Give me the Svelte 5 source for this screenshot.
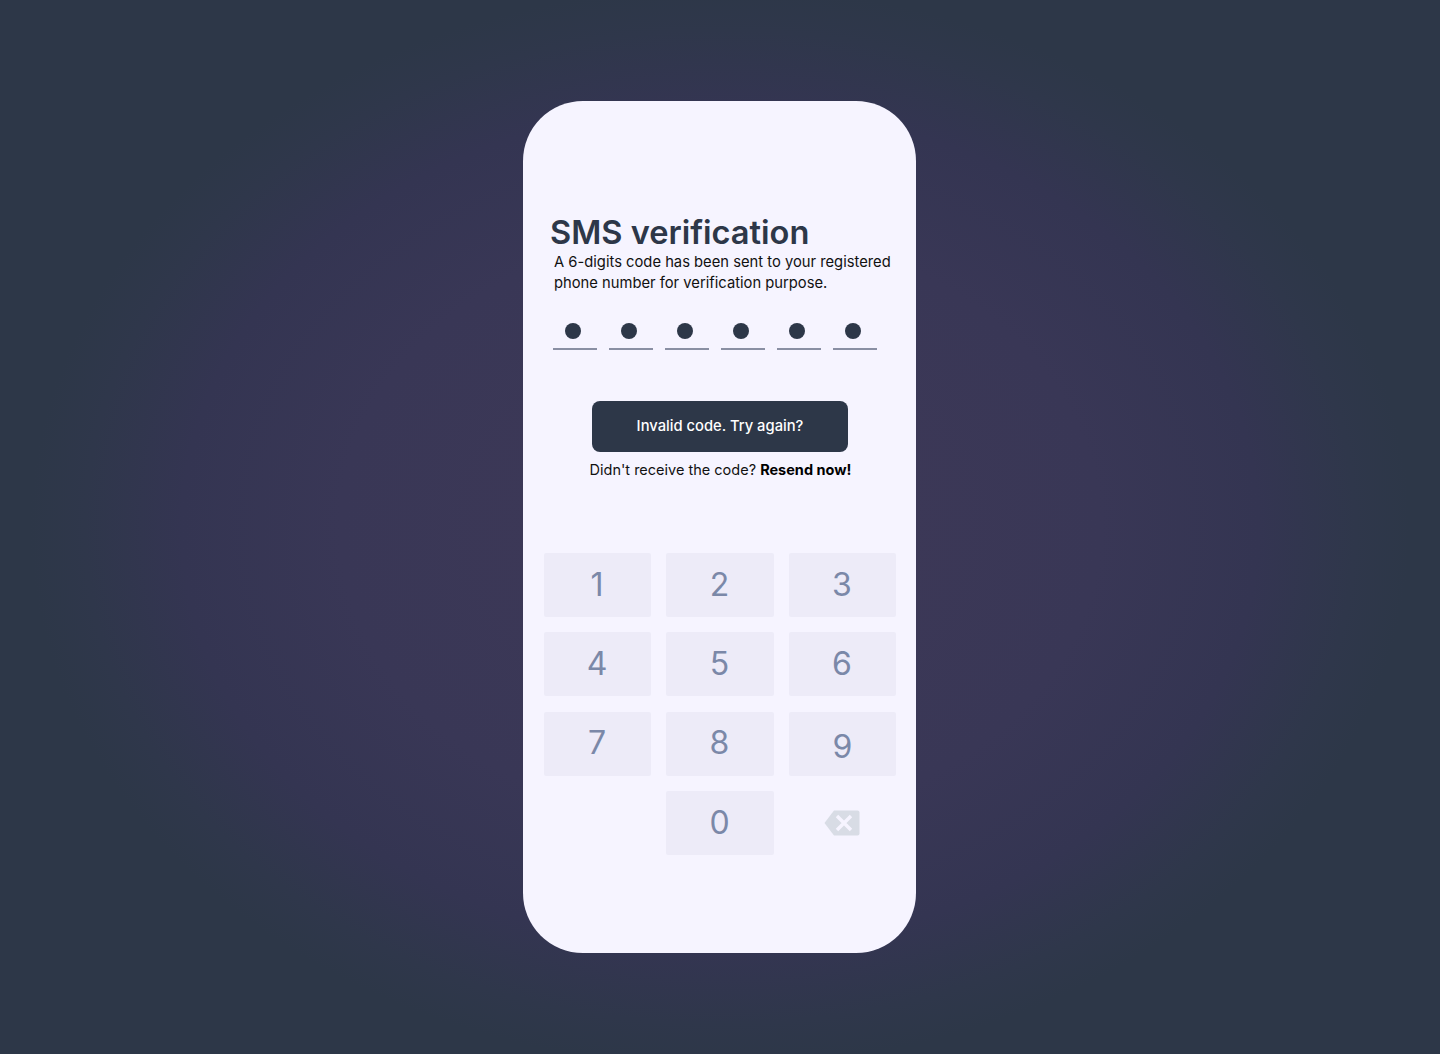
<script>
    let dots = [1, 2, 3, 4, 5, 6];
    let keys = ['1', '2', '3', '4', '5', '6', '7', '8', '9'];
</script>

<main>
    <div class="phone">
        <div class="intro">
            <h1>SMS verification</h1>
            <p>A 6-digits code has been sent to your registered<br />phone number for verification purpose.</p>
        </div>

        <div class="code">
            {#each dots as d}
                <div class="cell"><span class="dot"></span></div>
            {/each}
        </div>

        <button class="submit">Invalid code. Try again?</button>
        <div class="resend">Didn't receive the code? <b>Resend now!</b></div>

        <div class="keypad">
            {#each keys as k}
                <button class="key" class:low={k === '9'}>{k}</button>
            {/each}
            <span></span>
            <button class="key">0</button>
            <button class="del" aria-label="Delete">
                <svg width="36" height="26" viewBox="0 0 36 26">
                    <path d="M10 0.5H33.5a2 2 0 0 1 2 2V23.5a2 2 0 0 1-2 2H10L0.5 13Z" fill="#d8dce5" />
                    <path d="M13 6L27 20M27 6L13 20" stroke="#f6f4ff" stroke-width="3.4" fill="none" />
                </svg>
            </button>
        </div>
    </div>
</main>

<style>
    :global(body) {
        margin: 0;
    }

    main {
        height: 1054px;
        display: flex;
        justify-content: center;
        padding-top: 101px;
        box-sizing: border-box;
        background: radial-gradient(ellipse 690px 540px at 720px 527px, #423a59 0%, #3c3857 25%, #393756 55%, #343552 78%, #2f374b 92%, #2d3748 100%);
        font-family: "Inter", sans-serif;
    }

    .phone {
        width: 393px;
        height: 852px;
        background: #f6f4ff;
        border-radius: 60px;
        box-sizing: border-box;
        margin-left: -1px;
        padding-top: 113px;
    }

    .intro {
        padding-left: 27px;
    }

    h1 {
        margin: 0 0 1px;
        font-size: 32.6px;
        line-height: 37px;
        font-weight: 600;
        font-variant-ligatures: none;
        color: #2d3748;
    }

    p {
        margin: 0 0 0 4px;
        font-size: 14.75px;
        line-height: 21px;
        color: #111;
    }

    .code {
        display: flex;
        gap: 12px;
        margin-top: 24px;
        padding-left: 30px;
    }

    .cell {
        width: 44px;
        height: 30px;
        border-bottom: 2px solid #8a8fa3;
        display: flex;
        justify-content: center;
    }

    .dot {
        width: 16px;
        height: 16px;
        border-radius: 50%;
        background: #2d3748;
        margin-top: 5px;
        margin-right: 4px;
    }

    .submit {
        display: block;
        width: 256px;
        height: 51px;
        margin: 51px 0 0 69px;
        padding: 0 0 1px;
        border: none;
        border-radius: 8px;
        background: #2d3748;
        color: #fff;
        font-family: "Inter", sans-serif;
        font-size: 14.75px;
        font-weight: 500;
    }

    .resend {
        margin-top: 8px;
        text-align: center;
        font-size: 14.5px;
        line-height: 20px;
        color: #111;
        padding-left: 2px;
    }

    .resend b {
        font-weight: 700;
        color: #000;
    }

    .keypad {
        display: grid;
        grid-template-columns: 107px 108px 107px;
        grid-auto-rows: 64px;
        column-gap: 15px;
        row-gap: 15.4px;
        margin: 73px 0 0 21px;
    }

    .key {
        border: none;
        border-radius: 2px;
        background: #edebf8;
        color: #7b88a8;
        font-family: "Inter", sans-serif;
        font-size: 32px;
        padding: 0 1px 2px 0;
    }

    .key.low {
        padding: 5px 0 0;
    }

    .del {
        border: none;
        background: none;
        padding: 0 1px 1px 0;
        display: flex;
        align-items: center;
        justify-content: center;
    }
</style>
